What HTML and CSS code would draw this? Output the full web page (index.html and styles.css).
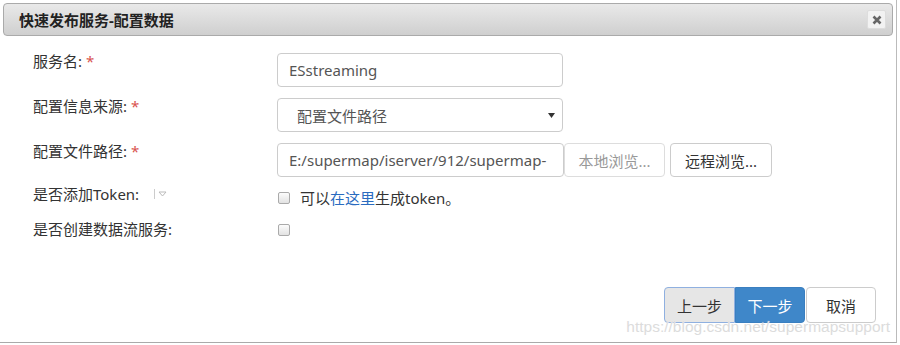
FILE: index.html
```html
<!DOCTYPE html>
<html lang="zh-cn">
<head>
<meta charset="UTF-8">
<meta name="viewport" content="width=device-width, initial-scale=1.0">
<title>快速发布服务-配置数据</title>
<link rel="stylesheet" href="styles.css">
</head>
<body>
    <div class="dialog">
        <div class="titlebar">
            <span class="title">快速发布服务-配置数据</span>
            <button class="close" title="关闭">
                <svg width="10" height="10" viewBox="0 0 10 10"><path d="M1.5 1.5 L8.5 8.5 M8.5 1.5 L1.5 8.5" stroke="#666" stroke-width="2.6"/></svg>
            </button>
        </div>
        <form class="form">
            <div class="row row-name">
                <label class="label">服务名: <span class="req">*</span></label>
                <input type="text" class="input" value="ESstreaming">
            </div>
            <div class="row row-source">
                <label class="label">配置信息来源: <span class="req">*</span></label>
                <div class="select">
                    <span>配置文件路径</span>
                    <svg width="7" height="5" viewBox="0 0 7 5"><path d="M0 0 H7 L3.5 5 Z" fill="#333"/></svg>
                </div>
            </div>
            <div class="row row-path">
                <label class="label">配置文件路径: <span class="req">*</span></label>
                <div class="path-group">
                    <input type="text" class="input input-path" value="E:/supermap/iserver/912/supermap-">
                    <button type="button" class="btn btn-local" disabled>本地浏览...</button>
                    <button type="button" class="btn btn-remote">远程浏览...</button>
                </div>
            </div>
            <div class="row row-check">
                <label class="label">是否添加Token:
                    <svg class="hint" width="14" height="10" viewBox="0 0 14 10"><path d="M1.5 0 V10" stroke="#ccc"/><path d="M6 3 H13 L9.5 7 Z" fill="none" stroke="#bbb"/></svg>
                </label>
                <div class="check">
                    <span class="box"></span>
                    <span>可以<a href="#" class="link">在这里</a>生成token。</span>
                </div>
            </div>
            <div class="row row-check2">
                <label class="label">是否创建数据流服务:</label>
                <div class="check">
                    <span class="box"></span>
                </div>
            </div>
        </form>
        <div class="footer">
            <button type="button" class="btn btn-prev">上一步</button>
            <button type="button" class="btn btn-next">下一步</button>
            <button type="button" class="btn btn-cancel">取消</button>
        </div>
        <div class="watermark">https://blog.csdn.net/supermapsupport</div>
    </div>
</body>
</html>
```

FILE: styles.css
```css
body {
    margin: 0;
    padding: 0;
    background: #fff;
    font-family: "Noto Sans", "Noto Sans CJK SC", sans-serif;
    font-size: 15px;
    color: #333;
}

.dialog {
    position: relative;
    width: 890px;
    height: 336px;
    padding: 3px;
    border-right: 1px solid #bbb;
    border-bottom: 1px solid #aaa;
    background: #fff;
}

.titlebar {
    display: flex;
    align-items: center;
    justify-content: space-between;
    height: 31px;
    padding: 0 6px 0 15px;
    border: 1px solid #aaa;
    border-radius: 4px;
    background: linear-gradient(#e9e9e9, #cfcfcf);
}

.title {
    font-weight: bold;
    color: #222;
    font-size: 15px;
}

.close {
    display: flex;
    align-items: center;
    justify-content: center;
    width: 19px;
    height: 19px;
    padding: 0;
    border: 1px solid #ddd;
    border-radius: 2px;
    background: #f2f2f2;
}

.form {
    padding: 0 0 0 30px;
}

.row {
    display: flex;
    align-items: flex-start;
}

.row-name {
    margin-top: 17px;
}

.row-source,
.row-path {
    margin-top: 11px;
}

.row-check {
    margin-top: 9px;
}

.row-check2 {
    margin-top: 13px;
}

.label {
    width: 244px;
    margin-top: -2px;
    line-height: 20px;
    display: flex;
    align-items: center;
}

.req {
    color: #d9534f;
    margin-left: 4px;
}

.hint {
    margin-left: 14px;
}

.input {
    box-sizing: border-box;
    width: 286px;
    height: 34px;
    padding: 0 11px;
    border: 1px solid #ccc;
    border-radius: 4px;
    font: inherit;
    color: #555;
}

.select {
    box-sizing: border-box;
    display: flex;
    align-items: center;
    justify-content: space-between;
    width: 286px;
    height: 34px;
    padding: 0 7px 0 19px;
    border: 1px solid #ccc;
    border-radius: 4px;
    color: #555;
}

.path-group {
    display: flex;
}

.input-path {
    width: 287px;
}

.btn {
    box-sizing: border-box;
    height: 34px;
    padding: 0 10px;
    border: 1px solid #ccc;
    border-radius: 4px;
    background: #fff;
    font: inherit;
    color: #333;
}

.btn-local {
    width: 101px;
    color: #999;
    border-color: #ddd;
}

.btn-remote {
    width: 102px;
    margin-left: 5px;
}

.check {
    display: flex;
    align-items: center;
    gap: 10px;
    line-height: 20px;
    margin-top: 2px;
}

.row-check2 .check {
    margin-top: 3px;
}

.box {
    box-sizing: border-box;
    width: 12px;
    height: 12px;
    margin-left: 1px;
    border: 1px solid #aaa;
    border-radius: 2px;
    background: linear-gradient(#fcfcfc, #e2e2e2);
}

.link {
    color: #2a6bbf;
    text-decoration: none;
}

.footer {
    position: absolute;
    right: 20px;
    bottom: 19px;
    display: flex;
}

.btn-prev {
    width: 71px;
    height: 36px;
    background: #e6e6e6;
    border-color: #8fb0e0;
    border-radius: 4px 0 0 4px;
}

.btn-next {
    width: 70px;
    height: 36px;
    background: #3f87c9;
    border-color: #3a7fc0;
    color: #fff;
    border-radius: 0 4px 4px 0;
}

.btn-cancel {
    width: 70px;
    height: 36px;
    margin-left: 1px;
}

.watermark {
    position: absolute;
    right: 6px;
    bottom: 6px;
    font-family: "Liberation Sans", sans-serif;
    font-size: 15.5px;
    color: #dcdcdc;
    text-shadow: 0 0 1px #fff;
}
```
